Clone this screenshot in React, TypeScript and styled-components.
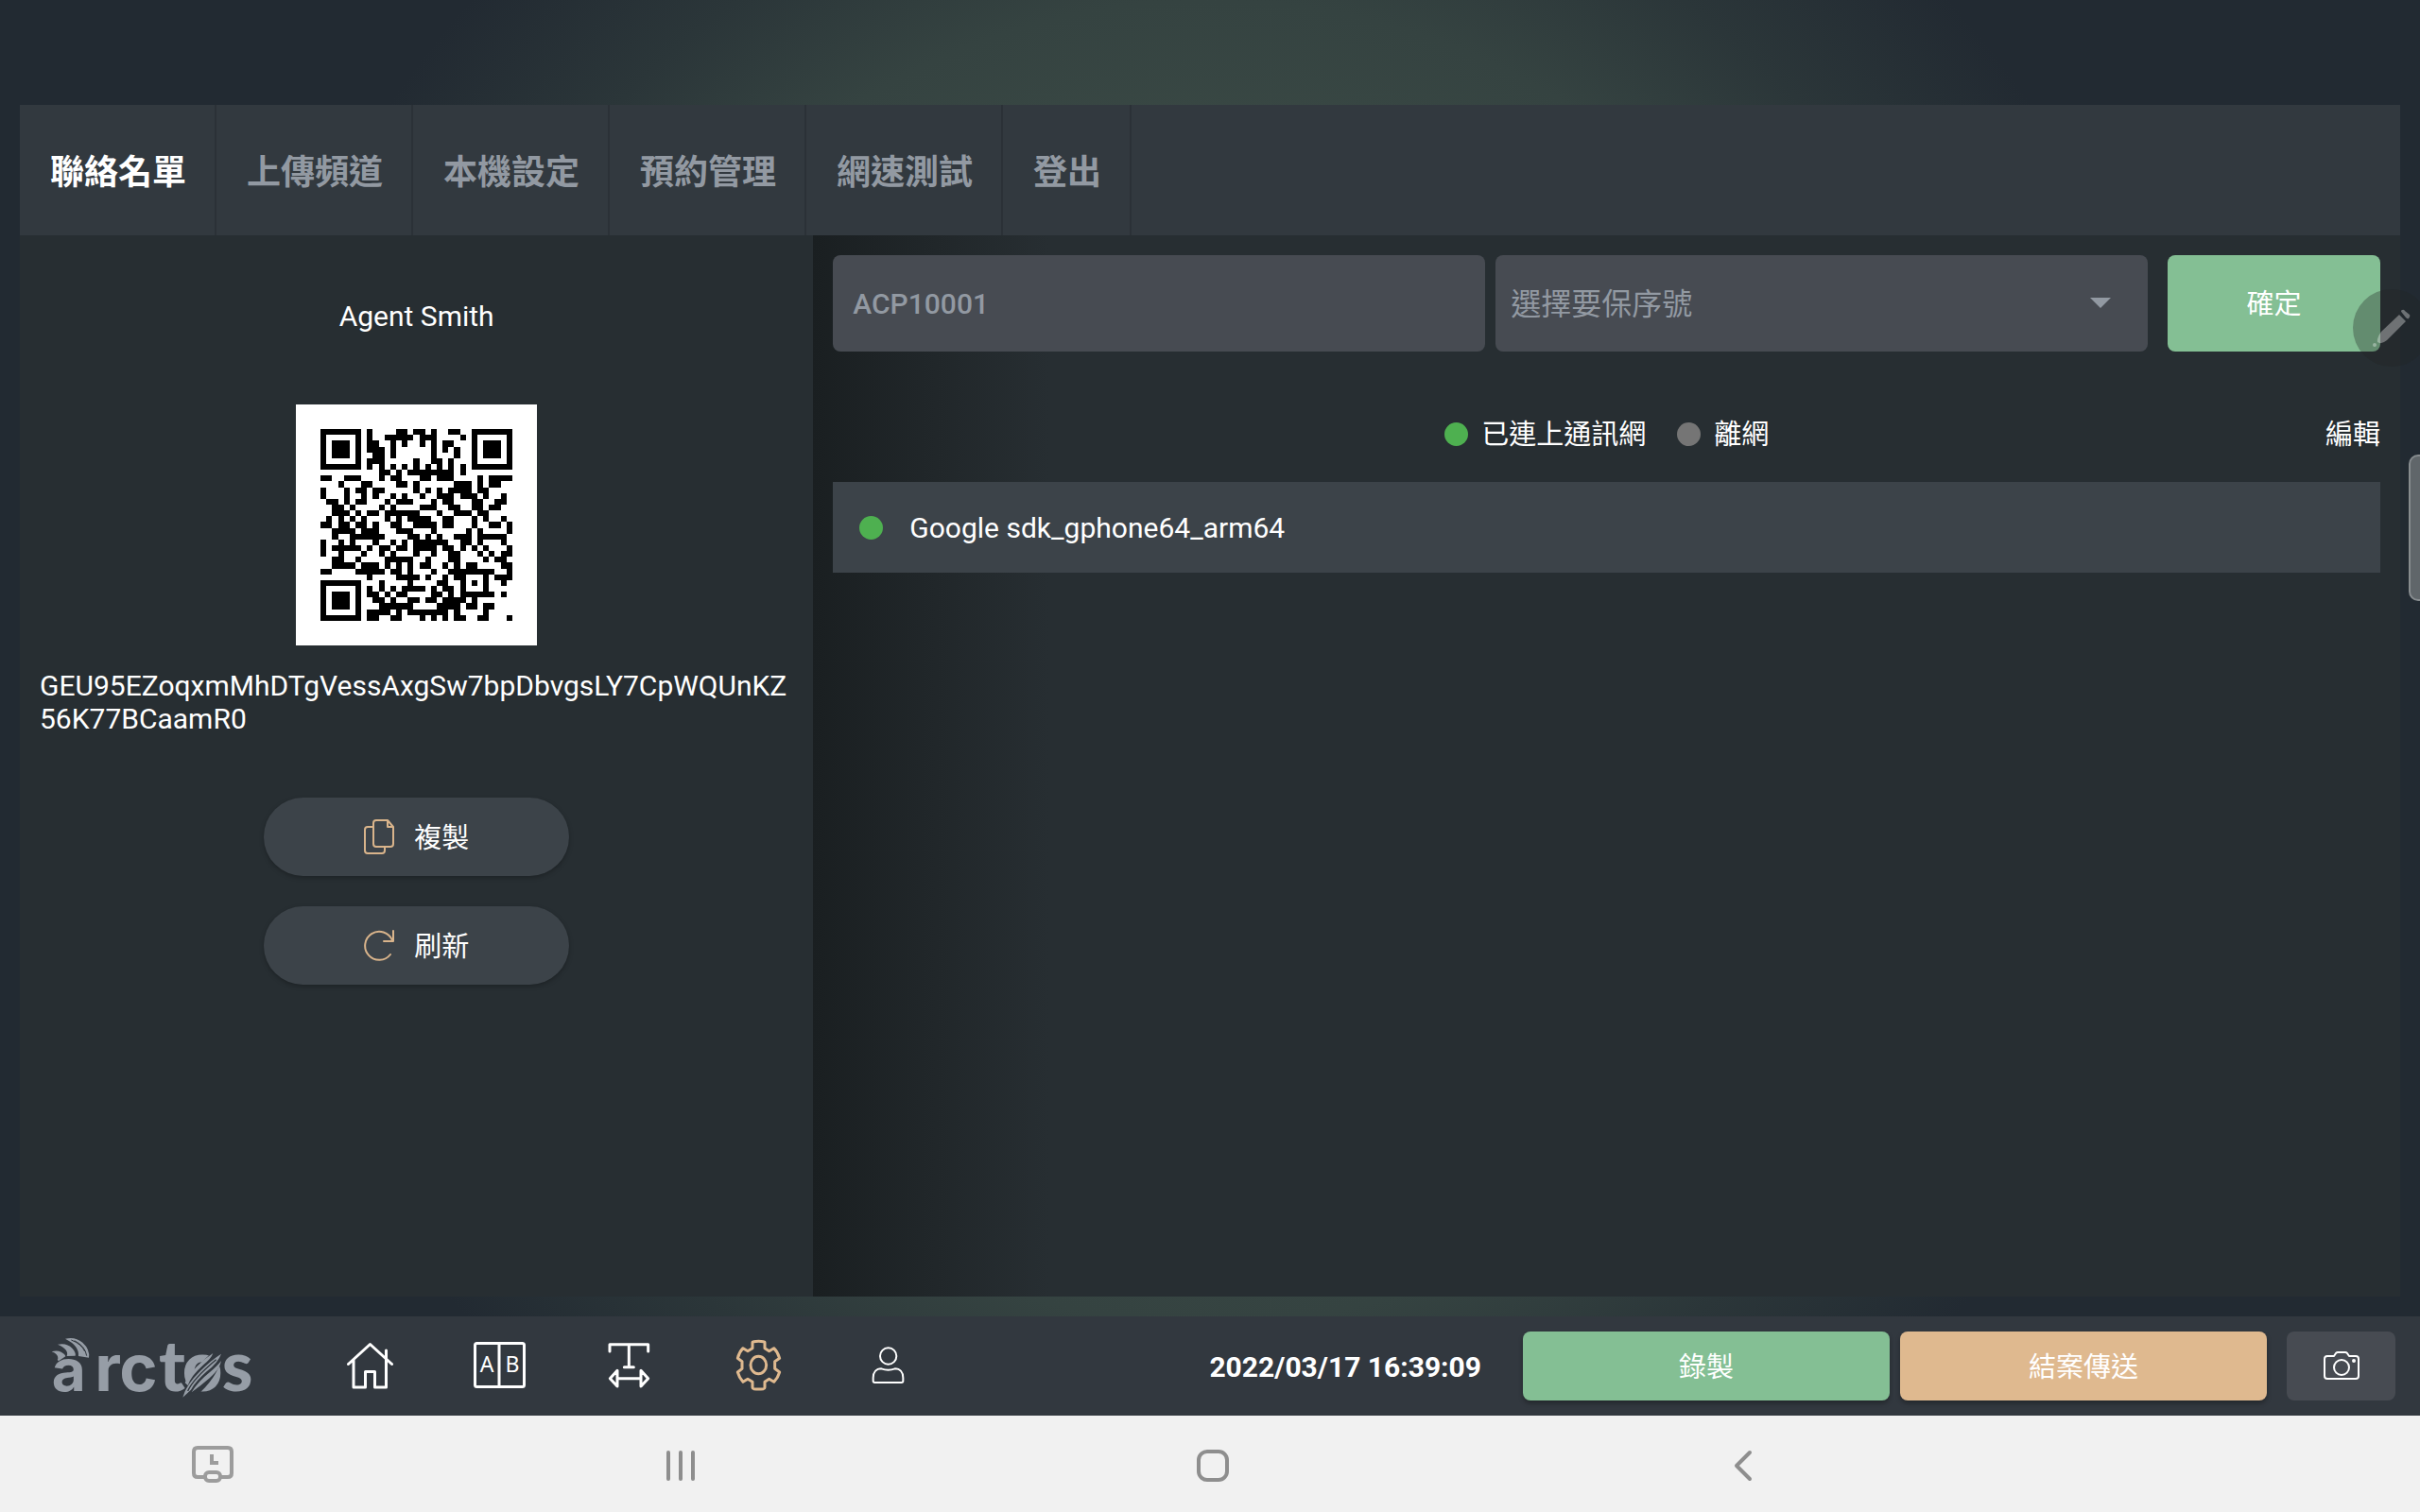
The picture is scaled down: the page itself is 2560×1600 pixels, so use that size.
import React, { useMemo } from "react";
import styled, { createGlobalStyle } from "styled-components";

/* ---------- QR code (version 4, level L, byte mode, mask 4) ---------- */

const QR_SIZE = 33;
const QR_DATA_WORDS = 80;
const QR_EC_WORDS = 20;
const QR_FORMAT_BITS = "110011000101111";

function gfMultiply(a: number, b: number): number {
  let result = 0;
  for (let i = 7; i >= 0; i--) {
    result = (result << 1) ^ ((result >>> 7) * 0x11d);
    result ^= ((b >>> i) & 1) * a;
  }
  return result & 0xff;
}

function errorCorrection(data: number[]): number[] {
  const generator: number[] = new Array(QR_EC_WORDS).fill(0);
  generator[QR_EC_WORDS - 1] = 1;
  let root = 1;
  for (let i = 0; i < QR_EC_WORDS; i++) {
    for (let j = 0; j < QR_EC_WORDS; j++) {
      generator[j] = gfMultiply(generator[j], root);
      if (j + 1 < QR_EC_WORDS) generator[j] ^= generator[j + 1];
    }
    root = gfMultiply(root, 2);
  }
  const rest: number[] = new Array(QR_EC_WORDS).fill(0);
  for (const word of data) {
    const factor = word ^ (rest.shift() as number);
    rest.push(0);
    generator.forEach((c, i) => {
      rest[i] ^= gfMultiply(c, factor);
    });
  }
  return rest;
}

function buildQr(text: string): boolean[][] {
  const bits: number[] = [];
  const push = (value: number, length: number) => {
    for (let i = length - 1; i >= 0; i--) bits.push((value >>> i) & 1);
  };
  push(4, 4);
  push(text.length, 8);
  for (const ch of text) push(ch.charCodeAt(0), 8);
  push(0, 4);
  while (bits.length % 8) bits.push(0);
  const words: number[] = [];
  for (let i = 0; i < bits.length; i += 8) {
    words.push(parseInt(bits.slice(i, i + 8).join(""), 2));
  }
  for (let pad = 0xec; words.length < QR_DATA_WORDS; pad ^= 0xec ^ 0x11) words.push(pad);
  const all = words.concat(errorCorrection(words));

  const dark: boolean[][] = Array.from({ length: QR_SIZE }, () => new Array(QR_SIZE).fill(false));
  const fixed: boolean[][] = Array.from({ length: QR_SIZE }, () => new Array(QR_SIZE).fill(false));
  const set = (row: number, col: number, value: boolean) => {
    if (row < 0 || col < 0 || row >= QR_SIZE || col >= QR_SIZE) return;
    dark[row][col] = value;
    fixed[row][col] = true;
  };

  for (let i = 0; i < QR_SIZE; i++) {
    set(6, i, i % 2 === 0);
    set(i, 6, i % 2 === 0);
  }
  [[3, 3], [3, QR_SIZE - 4], [QR_SIZE - 4, 3]].forEach(([r, c]) => {
    for (let dr = -4; dr <= 4; dr++) {
      for (let dc = -4; dc <= 4; dc++) {
        const ring = Math.max(Math.abs(dr), Math.abs(dc));
        set(r + dr, c + dc, ring !== 2 && ring !== 4);
      }
    }
  });
  for (let dr = -2; dr <= 2; dr++) {
    for (let dc = -2; dc <= 2; dc++) {
      set(26 + dr, 26 + dc, Math.max(Math.abs(dr), Math.abs(dc)) !== 1);
    }
  }
  const near = [[8, 0], [8, 1], [8, 2], [8, 3], [8, 4], [8, 5], [8, 7], [8, 8], [7, 8], [5, 8], [4, 8], [3, 8], [2, 8], [1, 8], [0, 8]];
  near.forEach(([r, c], i) => set(r, c, QR_FORMAT_BITS[i] === "1"));
  for (let i = 0; i < 15; i++) {
    const on = QR_FORMAT_BITS[i] === "1";
    if (i < 7) set(QR_SIZE - 1 - i, 8, on);
    else set(8, QR_SIZE - 15 + i, on);
  }
  set(QR_SIZE - 8, 8, true);

  let index = 0;
  for (let right = QR_SIZE - 1; right >= 1; right -= 2) {
    if (right === 6) right = 5;
    for (let step = 0; step < QR_SIZE; step++) {
      for (let j = 0; j < 2; j++) {
        const col = right - j;
        const upward = ((right + 1) & 2) === 0;
        const row = upward ? QR_SIZE - 1 - step : step;
        if (fixed[row][col]) continue;
        const bit = index < all.length * 8 ? (all[index >>> 3] >>> (7 - (index & 7))) & 1 : 0;
        const mask = (Math.floor(row / 2) + Math.floor(col / 3)) % 2 === 0;
        dark[row][col] = (bit === 1) !== mask;
        index++;
      }
    }
  }
  return dark;
}

function QrCode({ text }: { text: string }) {
  const path = useMemo(
    () =>
      buildQr(text)
        .map((cells, row) => cells.map((on, col) => (on ? `M${col} ${row}h1v1h-1z` : "")).join(""))
        .join(""),
    [text]
  );
  return (
    <QrSvg viewBox="-4.25 -4.25 41.5 41.5" shapeRendering="crispEdges" role="img" aria-label="QR code">
      <path d={path} fill="#000" />
    </QrSvg>
  );
}

/* ---------- Styles ---------- */

const GlobalStyle = createGlobalStyle`
  * { box-sizing: border-box; }
  body {
    margin: 0;
    font-family: Roboto, "Noto Sans CJK TC", sans-serif;
    font-size: 30px;
    line-height: 35px;
    color: #fff;
    background: #222a32;
  }
  button, input, select {
    font: inherit;
    color: inherit;
    border: 0;
    margin: 0;
    padding: 0;
  }
  button { background: none; cursor: pointer; }
  svg { display: block; flex: none; }
`;

const Page = styled.div`
  min-height: 100vh;
  display: flex;
  flex-direction: column;
  background: radial-gradient(circle at 50% 700px, #394844 550px, #354341 700px, #2b3639 860px, #222a32 1050px);
`;

const Screen = styled.main`
  flex: 1;
  display: flex;
  flex-direction: column;
  padding: 111px 21px 21px;
`;

const Tabs = styled.nav`
  display: flex;
  height: 138px;
  background: #32393f;
`;

const Tab = styled.button<{ $active?: boolean }>`
  padding: 5px 30px 0 32px;
  border-right: 2px solid #2b3137;
  font-size: 36px;
  font-weight: 700;
  line-height: 42px;
  white-space: nowrap;
  color: ${(p) => (p.$active ? "#fff" : "#9299a2")};
`;

const Panels = styled.div`
  flex: 1;
  display: grid;
  grid-template-columns: minmax(0, 1fr) minmax(0, 2fr);
  background: #272e32;
`;

const Profile = styled.section`
  display: flex;
  flex-direction: column;
  align-items: center;
  padding: 68px 21px 21px;
`;

const UserName = styled.h1`
  margin: 0 0 76px;
  font-size: 30px;
  font-weight: 400;
  line-height: 35px;
`;

const QrSvg = styled.svg`
  width: 255px;
  height: 255px;
  background: #fff;
`;

const Token = styled.p`
  margin: 25px 0 66px;
  align-self: stretch;
  word-break: break-all;
`;

const PillStack = styled.div`
  display: flex;
  flex-direction: column;
  gap: 32px;
`;

const Pill = styled.button`
  display: flex;
  align-items: center;
  justify-content: center;
  gap: 21px;
  width: 323px;
  height: 83px;
  border-radius: 42px;
  background: #3c4349;
  font-size: 29px;
  box-shadow: 0 2px 5px rgba(0, 0, 0, 0.25);
`;

const Contacts = styled.section`
  padding: 21px;
  background: linear-gradient(90deg, #1a1f21 0, #21272a 130px, #272e32 250px);
`;

const SearchForm = styled.form`
  display: flex;
  gap: 21px;
  height: 102px;
`;

const Fields = styled.div`
  flex: 1;
  display: grid;
  grid-template-columns: 1fr 1fr;
  gap: 11px;
`;

const TextField = styled.input`
  min-width: 0;
  padding: 0 21px;
  border-radius: 8px;
  background: #474b52;
  color: #9299a2;
  font-weight: 500;
`;

const SelectBox = styled.div`
  display: grid;
  align-items: center;
  min-width: 0;
  border-radius: 8px;
  background: #474b52;
  color: #9299a2;
  > * { grid-area: 1 / 1; }
  > svg { justify-self: end; margin-right: 39px; pointer-events: none; }
`;

const Select = styled.select`
  width: 100%;
  height: 100%;
  padding: 3px 16px 0;
  appearance: none;
  background: transparent;
  border-radius: 8px;
  font-size: 32px;
`;

const Label = styled.span`
  padding-top: 3px;
`;

const ActionButton = styled.button<{ $tone: string; $width: number; $raised?: boolean }>`
  display: flex;
  align-items: center;
  justify-content: center;
  width: ${(p) => p.$width}px;
  border-radius: 8px;
  background: ${(p) => p.$tone};
  font-size: 29px;
  box-shadow: ${(p) => (p.$raised ? "0 3px 5px rgba(0, 0, 0, 0.3)" : "none")};
`;

const LegendRow = styled.div`
  display: grid;
  grid-template-columns: 1fr auto 1fr;
  align-items: center;
  height: 42px;
  margin: 66px 0 30px;
  font-size: 29px;
`;

const Legend = styled.div`
  grid-column: 2;
  display: flex;
  gap: 33px;
`;

const LegendItem = styled.span`
  display: flex;
  align-items: center;
  gap: 14px;
`;

const Dot = styled.i<{ $online?: boolean }>`
  width: 25px;
  height: 25px;
  border-radius: 50%;
  background: ${(p) => (p.$online ? "#4eb050" : "#757575")};
`;

const EditButton = styled.button`
  display: flex;
  justify-self: end;
`;

const ContactList = styled.ul`
  margin: 0;
  padding: 0;
  list-style: none;
`;

const ContactRow = styled.li`
  display: flex;
  align-items: center;
  gap: 28px;
  height: 96px;
  padding: 0 28px;
  background: #3c4349;
`;

const BottomBar = styled.footer`
  display: flex;
  align-items: center;
  height: 105px;
  padding: 0 26px 0 50px;
  background: #32383f;
`;

const LogoSvg = styled.svg`
  width: 220px;
  height: 72px;
  overflow: visible;
`;

const MainMenu = styled.nav`
  display: flex;
  margin-left: 53px;
`;

const MenuButton = styled.button`
  display: flex;
  align-items: center;
  justify-content: center;
  width: 137px;
  height: 73px;
  padding-bottom: 2px;
  color: #fff;
`;

const Clock = styled.time`
  margin-left: auto;
  margin-right: 44px;
  padding-top: 2px;
  font-weight: 700;
`;

const BarActions = styled.div`
  display: flex;
  gap: 11px;
  height: 73px;
`;

const CameraSlot = styled.div`
  display: flex;
  margin-left: 10px;
`;

const SystemBar = styled.nav`
  display: grid;
  grid-template-columns: 450fr 540fr 586fr 536fr 448fr;
  align-items: center;
  height: 102px;
  background: #f1f1f1;
`;

const SystemButton = styled.button`
  display: flex;
  align-items: center;
  justify-content: center;
  height: 100%;
  padding-top: 4px;
  color: #8e8e8e;
`;

const FloatingPen = styled.button`
  position: absolute;
  top: 306px;
  right: -11px;
  width: 82px;
  height: 82px;
  border-radius: 50%;
  background: rgba(33, 36, 36, 0.33);
`;

const EdgeHandle = styled.div`
  position: absolute;
  top: 481px;
  right: 0;
  width: 12px;
  height: 155px;
  border: 2px solid #878c8f;
  border-right: 0;
  border-radius: 10px 0 0 10px;
  background: #60666a;
`;

const Frame = styled.div`
  position: relative;
  overflow: hidden;
`;

/* ---------- Drawings ---------- */

function Logo() {
  return (
    <LogoSvg viewBox="0 0 660 216" role="img" aria-label="arctos">
      <text y="186" fontSize="222" fill="#969da6" fontFamily="Lato, sans-serif" fontWeight="900">
        <tspan x="14" fontFamily="Inter, sans-serif" fontWeight="700" fontSize="186">a</tspan>
        <tspan x="151 229" fontFamily="Inter, sans-serif" fontWeight="700" fontSize="206">rc</tspan>
        <tspan x="354 428 554">tos</tspan>
      </text>
      <g fill="#969da6">
        <path d="M14 61Q30 55 44 62Q57 69 58 76L37 90Q30 90 34 82Q34 68 14 61Z" />
        <path d="M33 38Q62 32 79 50Q92 64 89 74L62 75Q70 54 33 38Z" />
        <path d="M57 20Q88 12 112 32Q136 54 132 80L99 75Q102 42 57 20Z" />
      </g>
      <path d="M86 26Q120 42 125 74M76 24Q108 36 119 60" fill="none" stroke="#32383f" strokeWidth="3" />
      <path d="M436 196Q438 140 520 66L556 66Q548 130 486 190Z" fill="#32383f" />
      <g fill="#969da6">
        <path d="M437 160Q450 128 498 86L526 66Q520 84 494 104Q456 138 446 168Z" />
        <path d="M430 206Q440 166 486 122Q520 88 552 68Q542 96 506 124Q470 156 456 182Z" />
        <path d="M458 190Q478 156 516 126Q540 106 552 90Q548 116 516 144Q486 170 458 190Z" />
      </g>
      <path d="M446 186Q462 148 536 86" fill="none" stroke="#32383f" strokeWidth="4" />
    </LogoSvg>
  );
}

const line = { fill: "none", stroke: "currentColor", strokeLinejoin: "round", strokeLinecap: "round" } as const;

const HomeIcon = () => (
  <svg width="49" height="50" viewBox="0 0 49 50" {...line} strokeWidth="3">
    <path d="M1.5 23.5L24.5 2.5L47.5 23.5M7 19V48H19.5V31.5H29.5V48H41.5V9" />
  </svg>
);

const CompareIcon = () => (
  <svg width="55" height="49" viewBox="0 0 55 49" {...line} strokeWidth="3">
    <rect x="1.5" y="1.5" width="52" height="46" rx="2" />
    <path d="M27 2V47" />
    <g fill="currentColor" stroke="none" fontFamily="'Noto Sans', sans-serif" fontSize="23" textAnchor="middle">
      <text x="14" y="32">A</text>
      <text x="41" y="32">B</text>
    </g>
  </svg>
);

const TextWidthIcon = () => (
  <svg width="45" height="49" viewBox="492 89 135 147" {...line} strokeWidth="9">
    <path d="M498 119V97H620V119M559 97V169M544 169H574M522 205H597M522 180V230L499 205ZM597 180V230L620 205Z" />
  </svg>
);

const GearIcon = () => (
  <svg width="49" height="55" viewBox="897 81 147 165" {...line} strokeWidth="9">
    <path d="M951 92Q951 89 955 89Q970 86 986 89Q990 89 990 92V110L1004 119L1019 110Q1031 122 1037 142L1022 152V175L1037 186Q1032 204 1019 217L1004 208L990 217V235Q990 238 986 239Q970 241 955 239Q951 238 951 235V217L936 208L921 217Q909 204 904 186L918 175V152L904 142Q909 122 921 110L936 119L951 110Z" />
    <ellipse cx="970" cy="163.5" rx="25" ry="28" />
  </svg>
);

const UserIcon = () => (
  <svg width="35" height="40" viewBox="1325 109 105 120" {...line} strokeWidth="6">
    <circle cx="1378" cy="139" r="26" />
    <path d="M1330 218V208C1330 190 1340 179 1356 179Q1378 187 1399 179C1415 179 1425 190 1425 208V218Q1425 223 1420 223H1335Q1330 223 1330 218Z" />
  </svg>
);

const CameraIcon = () => (
  <svg width="38" height="31" viewBox="0 0 38 31" {...line} strokeWidth="2">
    <path d="M11 5L13 2Q14 1 15 1H23Q24 1 25 2L27 5H34Q37 5 37 8V26Q37 29 34 29H4Q1 29 1 26V8Q1 5 4 5Z" />
    <circle cx="19" cy="17" r="8" />
    <circle cx="32" cy="10" r="1" fill="currentColor" />
  </svg>
);

const CopyIcon = () => (
  <svg width="32" height="38" viewBox="0 0 32 38" {...line} stroke="#d9b48b" strokeWidth="2">
    <path d="M13 1H25L31 8V26Q31 29 28 29H13Q10 29 10 26V4Q10 1 13 1ZM25 1V8H31" />
    <path d="M10 8H4Q1 8 1 11V33Q1 36 4 36H19Q22 36 22 33V29" />
  </svg>
);

const RefreshIcon = () => (
  <svg width="32" height="34" viewBox="0 0 32 34" {...line} stroke="#d9b48b" strokeWidth="2">
    <path d="M28 26A15 15 0 1 1 30 11M31 1V12H21" />
  </svg>
);

const CaretIcon = () => (
  <svg width="22" height="12" viewBox="0 0 22 12">
    <path d="M0 0H22L11 11Z" fill="#9299a2" />
  </svg>
);

const PenIcon = () => (
  <svg width="82" height="82" viewBox="0 0 82 82" fill="rgba(255,255,255,0.34)">
    <path d="M49 27L56 34L36 54Q30 59 26 56Q25 52 30 45Z" />
    <path d="M52 25Q50 23 52 22Q54 21 55 23L60 27Q61 29 59 31Q58 32 56 30Z" />
    <circle cx="23" cy="59" r="2" />
  </svg>
);

const ScreenTimeIcon = () => (
  <svg width="44" height="42" viewBox="0 0 44 42" fill="none" stroke="#9c9c9c" strokeWidth="4" strokeLinejoin="round">
    <path d="M13 33H6Q2 33 2 29V6Q2 2 6 2H38Q42 2 42 6V29Q42 33 38 33H31" />
    <rect x="14" y="28" width="16" height="9" rx="4" />
    <path d="M21 9V18H28" strokeLinejoin="miter" />
  </svg>
);

const RecentsIcon = () => (
  <svg width="32" height="34" viewBox="0 0 32 34" {...line} strokeWidth="4">
    <path d="M3 3V31M16 3V31M29 3V31" />
  </svg>
);

const HomeKeyIcon = () => (
  <svg width="36" height="36" viewBox="0 0 36 36" {...line} strokeWidth="4">
    <rect x="3" y="3" width="30" height="30" rx="9" />
  </svg>
);

const BackIcon = () => (
  <svg width="20" height="34" viewBox="0 0 20 34" {...line} strokeWidth="4">
    <path d="M17 3L3 17L17 31" />
  </svg>
);

/* ---------- Page ---------- */

const TABS = ["聯絡名單", "上傳頻道", "本機設定", "預約管理", "網速測試", "登出"];
const TOKEN = "GEU95EZoqxmMhDTgVessAxgSw7bpDbvgsLY7CpWQUnKZ56K77BCaamR0";

const MENU = [
  { name: "home", icon: <HomeIcon /> },
  { name: "compare", icon: <CompareIcon /> },
  { name: "text width", icon: <TextWidthIcon /> },
  { name: "settings", icon: <GearIcon />, color: "#dfb98f" },
  { name: "account", icon: <UserIcon /> },
];

const AccentMenuButton = styled(MenuButton)`
  color: #dfb98f;
`;

export default function App() {
  return (
    <Frame lang="zh-Hant">
      <GlobalStyle />
      <Page>
        <Screen>
          <Tabs>
            {TABS.map((label, i) => (
              <Tab key={label} type="button" $active={i === 0}>
                {label}
              </Tab>
            ))}
          </Tabs>
          <Panels>
            <Profile>
              <UserName>Agent Smith</UserName>
              <QrCode text={TOKEN} />
              <Token>{TOKEN}</Token>
              <PillStack>
                <Pill type="button">
                  <CopyIcon />
                  <Label>複製</Label>
                </Pill>
                <Pill type="button">
                  <RefreshIcon />
                  <Label>刷新</Label>
                </Pill>
              </PillStack>
            </Profile>
            <Contacts>
              <SearchForm onSubmit={(e: React.FormEvent) => e.preventDefault()}>
                <Fields>
                  <TextField type="text" aria-label="保單編號" defaultValue="ACP10001" />
                  <SelectBox>
                    <Select aria-label="要保序號" defaultValue="">
                      <option value="">選擇要保序號</option>
                    </Select>
                    <CaretIcon />
                  </SelectBox>
                </Fields>
                <ActionButton type="submit" $tone="#84bf94" $width={225}>
                  <Label>確定</Label>
                </ActionButton>
              </SearchForm>
              <LegendRow>
                <Legend>
                  <LegendItem>
                    <Dot $online />
                    <Label>已連上通訊網</Label>
                  </LegendItem>
                  <LegendItem>
                    <Dot />
                    <Label>離網</Label>
                  </LegendItem>
                </Legend>
                <EditButton type="button">
                  <Label>編輯</Label>
                </EditButton>
              </LegendRow>
              <ContactList>
                <ContactRow>
                  <Dot $online />
                  Google sdk_gphone64_arm64
                </ContactRow>
              </ContactList>
            </Contacts>
          </Panels>
        </Screen>
        <BottomBar>
          <Logo />
          <MainMenu>
            {MENU.map((item) => {
              const Item = item.color ? AccentMenuButton : MenuButton;
              return (
                <Item key={item.name} type="button" aria-label={item.name}>
                  {item.icon}
                </Item>
              );
            })}
          </MainMenu>
          <Clock>2022/03/17 16:39:09</Clock>
          <BarActions>
            <ActionButton type="button" $tone="#84bf94" $width={388} $raised>
              <Label>錄製</Label>
            </ActionButton>
            <ActionButton type="button" $tone="#dfb98f" $width={388} $raised>
              <Label>結案傳送</Label>
            </ActionButton>
            <CameraSlot>
              <ActionButton type="button" aria-label="camera" $tone="#474b52" $width={115}>
                <CameraIcon />
              </ActionButton>
            </CameraSlot>
          </BarActions>
        </BottomBar>
        <SystemBar>
          <SystemButton type="button" aria-label="screen time"><ScreenTimeIcon /></SystemButton>
          <SystemButton type="button" aria-label="recents"><RecentsIcon /></SystemButton>
          <SystemButton type="button" aria-label="home key"><HomeKeyIcon /></SystemButton>
          <SystemButton type="button" aria-label="back"><BackIcon /></SystemButton>
        </SystemBar>
      </Page>
      <FloatingPen type="button" aria-label="pen"><PenIcon /></FloatingPen>
      <EdgeHandle />
    </Frame>
  );
}
